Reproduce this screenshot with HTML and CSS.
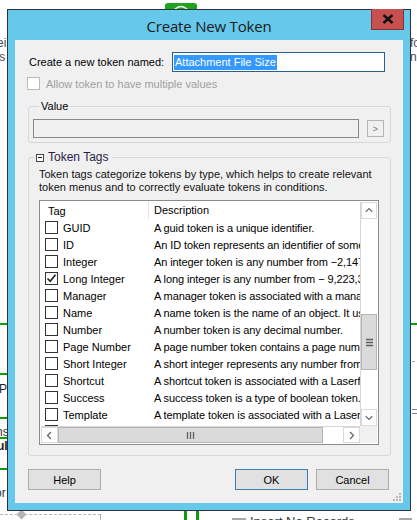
FILE: index.html
```html
<!DOCTYPE html>
<html>
<head>
<meta charset="utf-8">
<link rel="stylesheet" href="styles.css">
</head>
<body>
<div class="desk">
  <div class="bg-node"><svg width="32" height="7" viewBox="0 0 32 7"><path d="M0 7 V3 Q0 0 3 0 H29 Q32 0 32 3 V7 Z" fill="#1fa31f"/><path d="M9 7 Q16 0 23 7" fill="none" stroke="#e8f6e8" stroke-width="1.6"/></svg></div>
  <span class="bg-text t1">Thei</span>
  <span class="bg-text t2">Meas</span>
  <span class="bg-text t3">fo</span>
  <span class="bg-text t4">nc</span>
  <span class="bg-text t5">P</span>
  <span class="bg-text t6">ns</span>
  <span class="bg-text t7">ul</span>
  <span class="bg-text t8">or</span>
  <span class="gline g1"></span>
  <span class="gline g2"></span>
  <span class="gline g3"></span>
  <span class="gline g4"></span>
  <span class="gline g5"></span>
  <span class="gline g6"></span>
  <span class="rmark r1"></span>
  <span class="rmark r2"></span>
  <span class="dash"></span>
  <span class="diamond"></span>
  <span class="vgreen v1"></span>
  <span class="vgreen v2"></span>
  <span class="graybar b1"></span>
  <span class="graybar b2"></span>
  <span class="bg-text ins">Insert No Records</span>

  <div class="window">
    <div class="titlebar">
      <span class="title">Create New Token</span>
      <div class="close"><svg width="12" height="10" viewBox="0 0 12 10"><path d="M1.5 1 L10.5 9 M10.5 1 L1.5 9" stroke="#111" stroke-width="2.4"/></svg></div>
    </div>
    <div class="client">
      <div class="name-row">
        <span class="name-label">Create a new token named:</span>
        <div class="textbox focused"><span class="sel">Attachment File Size</span></div>
      </div>
      <div class="check-row disabled">
        <span class="cb cb-disabled"></span>
        <span>Allow token to have multiple values</span>
      </div>
      <div class="group value-group">
        <div class="group-title">Value</div>
        <div class="value-row">
          <div class="value-box"></div>
          <div class="mini-btn">&gt;</div>
        </div>
      </div>
      <div class="group tags-group">
        <div class="group-title tags-title"><span class="collapse"></span>Token Tags</div>
        <p class="desc">Token tags categorize tokens by type, which helps to create relevant<br>token menus and to correctly evaluate tokens in conditions.</p>
        <div class="list">
          <div class="list-body">
            <div class="lrow header"><span class="c1 hdr-tag">Tag</span><span class="c2 hdr-desc">Description</span></div>
            <div class="lrow"><span class="c1"><span class="cb"></span>GUID</span><span class="c2">A guid token is a unique identifier.</span></div>
            <div class="lrow"><span class="c1"><span class="cb"></span>ID</span><span class="c2">An ID token represents an identifier of some object.</span></div>
            <div class="lrow"><span class="c1"><span class="cb"></span>Integer</span><span class="c2">An integer token is any number from &minus;2,147,483,648</span></div>
            <div class="lrow"><span class="c1"><span class="cb checked"><svg width="11" height="11" viewBox="0 0 11 11"><path d="M1.5 5.5 L4.2 8.3 L9.5 1.8" fill="none" stroke="#222" stroke-width="1.7"/></svg></span>Long Integer</span><span class="c2">A long integer is any number from &minus; 9,223,372,036</span></div>
            <div class="lrow"><span class="c1"><span class="cb"></span>Manager</span><span class="c2">A manager token is associated with a manager.</span></div>
            <div class="lrow"><span class="c1"><span class="cb"></span>Name</span><span class="c2">A name token is the name of an object. It usually</span></div>
            <div class="lrow"><span class="c1"><span class="cb"></span>Number</span><span class="c2">A number token is any decimal number.</span></div>
            <div class="lrow"><span class="c1"><span class="cb"></span>Page Number</span><span class="c2">A page number token contains a page number.</span></div>
            <div class="lrow"><span class="c1"><span class="cb"></span>Short Integer</span><span class="c2">A short integer represents any number from &minus;32,768</span></div>
            <div class="lrow"><span class="c1"><span class="cb"></span>Shortcut</span><span class="c2">A shortcut token is associated with a Laserfiche shortcut.</span></div>
            <div class="lrow"><span class="c1"><span class="cb"></span>Success</span><span class="c2">A success token is a type of boolean token.</span></div>
            <div class="lrow"><span class="c1"><span class="cb"></span>Template</span><span class="c2">A template token is associated with a Laserfiche template.</span></div>
            <div class="lrow"><span class="c1"><span class="cb"></span>Text</span><span class="c2">A text token is any string.</span></div>
          </div>
          <div class="vscroll">
            <div class="sbtn"><svg width="15" height="15" viewBox="0 0 15 15"><path d="M4 9 L7.5 5.5 L11 9" fill="none" stroke="#606060" stroke-width="1.2"/></svg></div>
            <div class="vtrack"><div class="vthumb"><svg width="9" height="9" viewBox="0 0 9 9"><path d="M1 1.5 H8 M1 4.5 H8 M1 7.5 H8" stroke="#606060" stroke-width="1.3"/></svg></div></div>
            <div class="sbtn"><svg width="15" height="15" viewBox="0 0 15 15"><path d="M4 6 L7.5 9.5 L11 6" fill="none" stroke="#606060" stroke-width="1.2"/></svg></div>
          </div>
          <div class="hscroll">
            <div class="sbtn"><svg width="15" height="15" viewBox="0 0 15 15"><path d="M9 4 L5.5 7.5 L9 11" fill="none" stroke="#606060" stroke-width="1.2"/></svg></div>
            <div class="hthumb"><svg width="9" height="9" viewBox="0 0 9 9"><path d="M1.5 1 V8 M4.5 1 V8 M7.5 1 V8" stroke="#606060" stroke-width="1.3"/></svg></div>
            <div class="htrack"></div>
            <div class="sbtn"><svg width="15" height="15" viewBox="0 0 15 15"><path d="M6 4 L9.5 7.5 L6 11" fill="none" stroke="#606060" stroke-width="1.2"/></svg></div>
          </div>
          <div class="corner"></div>
        </div>
      </div>
      <div class="buttons">
        <div class="btn">Help</div>
        <div class="spacer"></div>
        <div class="btn default">OK</div>
        <div class="btn">Cancel</div>
      </div>
      <div class="grip"><svg width="8" height="8" viewBox="0 0 8 8"><g fill="#b8b8b8"><rect x="6" y="0" width="2" height="2"/><rect x="3" y="3" width="2" height="2"/><rect x="6" y="3" width="2" height="2"/><rect x="0" y="6" width="2" height="2"/><rect x="3" y="6" width="2" height="2"/><rect x="6" y="6" width="2" height="2"/></g></svg></div>
    </div>
  </div>
</div>
</body>
</html>
```

FILE: styles.css
```css
html, body {
  margin: 0;
  padding: 0;
}
body {
  background: #ffffff;
  font-family: "Liberation Sans", Arial, sans-serif;
  font-size: 11px;
  color: #000;
}
.desk {
  position: relative;
  width: 417px;
  height: 520px;
  overflow: hidden;
  background: #fff;
}

/* background canvas fragments */
.bg-node { position: absolute; left: 165px; top: 3px; line-height: 0; }
.bg-text { position: absolute; font-size: 12px; color: #4a4a4a; line-height: 14px; white-space: nowrap; }
.t1 { left: -17px; top: 36px; }
.t2 { left: -24px; top: 50px; }
.t3 { left: 410px; top: 36px; }
.t4 { left: 410px; top: 50px; }
.t5 { left: -1px; top: 382px; color: #222; }
.t6 { left: -4px; top: 425px; color: #333; }
.t7 { left: -3px; top: 439px; color: #222; font-weight: bold; }
.t8 { left: -5px; top: 486px; color: #333; }
.ins { left: 250px; top: 515px; color: #333; font-size: 13px; }
.gline { position: absolute; height: 2px; background: #0a9e0a; }
.g1 { left: 0; width: 8px; top: 323px; }
.g2 { left: 0; width: 8px; top: 373px; }
.g3 { left: 0; width: 8px; top: 417px; }
.g4 { left: 0; width: 8px; top: 437px; }
.g5 { left: 0; width: 8px; top: 468px; }
.g6 { left: 410px; width: 7px; top: 323px; }
.rmark { position: absolute; left: 412px; height: 1px; background: #9aa; }
.r1 { top: 361px; width: 3px; }
.r2 { top: 409px; width: 5px; height: 3px; border-top: 1px solid #789; border-bottom: 1px solid #789; background: transparent; }
.dash { position: absolute; left: 0; top: 514px; width: 100px; height: 6px; border-top: 1px dashed #b5b5b5; border-right: 1px solid #b5b5b5; }
.diamond { position: absolute; left: 18px; top: 511px; width: 7px; height: 7px; background: #b5b5b5; transform: rotate(45deg); }
.vgreen { position: absolute; top: 511px; width: 3px; height: 9px; background: #0a9e0a; }
.v1 { left: 184px; }
.v2 { left: 196px; }
.graybar { position: absolute; top: 518px; height: 2px; background: #a8a8a8; }
.b1 { left: 232px; width: 14px; }
.b2 { left: 399px; width: 13px; }

/* window */
.window {
  position: absolute;
  left: 7px;
  top: 9px;
  width: 404px;
  height: 502px;
  box-sizing: border-box;
  border: 1px solid #2e3236;
  background: #66c8ea;
  padding: 0 7px 7px 7px;
  display: flex;
  flex-direction: column;
}
.titlebar {
  position: relative;
  height: 30px;
  display: flex;
  align-items: center;
  justify-content: center;
  flex: none;
}
.title {
  font-family: "Open Sans", "Noto Sans", sans-serif;
  font-size: 15px;
  color: #1b1b1b;
  margin-top: 1px;
  letter-spacing: -0.2px;
}
.close {
  position: absolute;
  right: -1px;
  top: -1px;
  width: 33px;
  height: 21px;
  box-sizing: border-box;
  background: #c75050;
  border: 1px solid #8a3030;
  border-top: none;
  display: flex;
  align-items: center;
  justify-content: center;
}
.client {
  position: relative;
  flex: 1;
  background: #f0f0f0;
  padding: 12px 12px 0 13px;
  display: flex;
  flex-direction: column;
}

.name-row {
  display: flex;
  align-items: center;
  height: 20px;
}
.name-label {
  width: 143px;
  padding-left: 1px;
}
.textbox {
  width: 213px;
  height: 20px;
  box-sizing: border-box;
  border: 1px solid #2d5f8e;
  background: #fff;
  padding: 1px 1px;
  display: flex;
  align-items: center;
}
.sel {
  background: #3399ff;
  color: #fff;
  line-height: 15px;
  padding: 0 1px;
}

.check-row {
  display: flex;
  align-items: center;
  margin-top: 5px;
  margin-left: -1px;
  height: 13px;
  gap: 6px;
}
.disabled { color: #a0a0a0; }
.cb {
  width: 13px;
  height: 13px;
  box-sizing: border-box;
  border: 1px solid #333;
  background: #fff;
  display: inline-flex;
  align-items: center;
  justify-content: center;
  flex: none;
}
.cb-disabled { border-color: #bcbcbc; }

.group {
  border: 1px solid #d8d8d8;
  border-radius: 3px;
}
.group-title {
  width: fit-content;
  margin: -7px 0 0 6px;
  padding: 0 2px;
  line-height: 13px;
  background: #f0f0f0;
}
.value-group {
  margin-top: 16px;
  padding: 0 0 4px 4px;
}
.value-row {
  display: flex;
  align-items: center;
  margin-top: 6px;
  gap: 8px;
}
.value-box {
  width: 326px;
  height: 19px;
  box-sizing: border-box;
  border: 1px solid #8a8a8a;
  background: #f0f0f0;
}
.mini-btn {
  width: 17px;
  height: 17px;
  box-sizing: border-box;
  border: 1px solid #b4b4b4;
  background: #f0f0f0;
  color: #777;
  font-size: 9px;
  display: flex;
  align-items: center;
  justify-content: center;
}

.tags-group {
  margin-top: 14px;
  padding: 0 0 10px 10px;
}
.tags-title {
  margin-left: -4px;
  display: flex;
  align-items: center;
  gap: 4px;
  font-size: 12px;
  color: #2a1c46;
  padding: 0 3px 0 1px;
}
.collapse {
  width: 8px;
  height: 8px;
  box-sizing: border-box;
  border: 1px solid #444;
  background: #fff;
  position: relative;
}
.collapse::after {
  content: "";
  position: absolute;
  left: 1px;
  right: 1px;
  top: 2px;
  height: 1px;
  background: #222;
}
.desc {
  margin: 4px 0 0 0;
  line-height: 13px;
  color: #111;
}
.list {
  margin-top: 6px;
  width: 340px;
  height: 245px;
  box-sizing: border-box;
  border: 1px solid #8c8c8c;
  padding: 1px;
  background: #fff;
  display: grid;
  grid-template-columns: 319px 17px;
  grid-template-rows: 224px 17px;
}
.list-body {
  overflow: hidden;
}
.lrow {
  display: flex;
  height: 17px;
  align-items: center;
  white-space: nowrap;
}
.c1 {
  width: 107px;
  flex: none;
  display: flex;
  align-items: center;
  gap: 5px;
  padding-left: 4px;
  box-sizing: border-box;
}
.c2 {
  padding-left: 6px;
  letter-spacing: -0.1px;
}
.header .c1 { padding-left: 7px; }
.hdr-desc {
  border-left: 1px solid #e5e5e5;
  padding-left: 5px;
  height: 17px;
  line-height: 17px;
  flex: 1;
  letter-spacing: 0;
}

.vscroll {
  display: flex;
  flex-direction: column;
  background: #fff;
  border-left: 1px solid #d6d6d6;
  box-sizing: border-box;
}
.sbtn {
  width: 16px;
  height: 16px;
  box-sizing: border-box;
  border: 1px solid #d9d9d9;
  background: #fff;
  display: flex;
  align-items: center;
  justify-content: center;
  flex: none;
}
.vscroll .sbtn { width: 16px; height: 17px; }
.vtrack {
  flex: 1;
  padding-top: 95px;
}
.vthumb {
  height: 56px;
  box-sizing: border-box;
  border: 1px solid #b5b5b5;
  background: #dadada;
  display: flex;
  align-items: center;
  justify-content: center;
}
.hscroll {
  display: flex;
  background: #fff;
  border-top: 1px solid #d6d6d6;
  box-sizing: border-box;
}
.hscroll .sbtn { width: 17px; height: 16px; }
.hthumb {
  width: 265px;
  box-sizing: border-box;
  border: 1px solid #b5b5b5;
  background: #dadada;
  display: flex;
  align-items: center;
  justify-content: center;
}
.htrack { flex: 1; }
.corner { background: #f0f0f0; }

.buttons {
  display: flex;
  margin-top: 13px;
  margin-right: 2px;
  gap: 8px;
}
.spacer { flex: 1; }
.btn {
  width: 73px;
  height: 21px;
  box-sizing: border-box;
  border: 1px solid #adadad;
  background: #e1e1e1;
  display: flex;
  align-items: center;
  justify-content: center;
}
.btn.default { border-color: #3c7fb1; }
.grip {
  position: absolute;
  right: 2px;
  bottom: 2px;
  line-height: 0;
}
```
